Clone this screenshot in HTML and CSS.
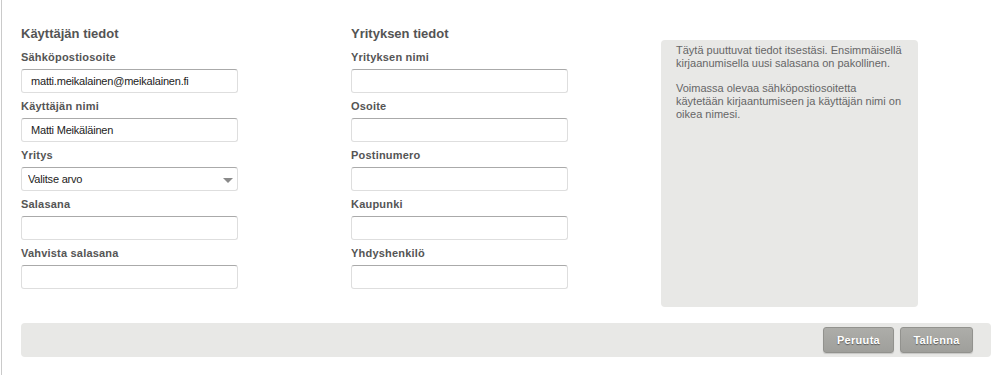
FILE: index.html
```html
<!DOCTYPE html>
<html lang="fi">
<head>
    <meta charset="UTF-8">
    <meta name="viewport" content="width=device-width, initial-scale=1.0">
    <title>Omat tiedot</title>
    <link rel="stylesheet" href="styles.css">
</head>
<body>
    <div class="page">
        <div class="content">
            <div class="column">
                <h3>Käyttäjän tiedot</h3>
                <div class="field">
                    <label for="email">Sähköpostiosoite</label>
                    <input type="text" id="email" value="matti.meikalainen@meikalainen.fi">
                </div>
                <div class="field">
                    <label for="name">Käyttäjän nimi</label>
                    <input type="text" id="name" value="Matti Meikäläinen">
                </div>
                <div class="field">
                    <label for="company">Yritys</label>
                    <div class="select-wrap">
                        <select id="company">
                            <option>Valitse arvo</option>
                        </select>
                    </div>
                </div>
                <div class="field">
                    <label for="password">Salasana</label>
                    <input type="password" id="password">
                </div>
                <div class="field">
                    <label for="password2">Vahvista salasana</label>
                    <input type="password" id="password2">
                </div>
            </div>

            <div class="column">
                <h3>Yrityksen tiedot</h3>
                <div class="field">
                    <label for="companyName">Yrityksen nimi</label>
                    <input type="text" id="companyName">
                </div>
                <div class="field">
                    <label for="address">Osoite</label>
                    <input type="text" id="address">
                </div>
                <div class="field">
                    <label for="zip">Postinumero</label>
                    <input type="text" id="zip">
                </div>
                <div class="field">
                    <label for="city">Kaupunki</label>
                    <input type="text" id="city">
                </div>
                <div class="field">
                    <label for="contact">Yhdyshenkilö</label>
                    <input type="text" id="contact">
                </div>
            </div>

            <div class="info">
                <p>Täytä puuttuvat tiedot itsestäsi. Ensimmäisellä kirjaanumisella uusi salasana on pakollinen.</p>
                <p>Voimassa olevaa sähköpostiosoitetta käytetään kirjaantumiseen ja käyttäjän nimi on oikea nimesi.</p>
            </div>
        </div>

        <div class="actions">
            <button type="button" class="btn-cancel">Peruuta</button>
            <button type="submit" class="btn-save">Tallenna</button>
        </div>
    </div>
</body>
</html>
```

FILE: styles.css
```css
* {
    margin: 0;
    padding: 0;
    box-sizing: border-box;
}
body {
    font-family: "Liberation Sans", Arial, sans-serif;
    background: #fff;
}
.page {
    margin-left: 1px;
    border-left: 1px solid #cacaca;
    min-height: 100vh;
    padding: 0 5px 0 19px;
}
.content {
    display: grid;
    grid-template-columns: 330px 310px 257px;
    align-items: start;
    padding-top: 26px;
}
.column h3 {
    font-size: 13px;
    line-height: 15px;
    font-weight: bold;
    color: #545454;
    margin-bottom: 10px;
}
.field label {
    display: block;
    font-size: 11px;
    line-height: 13px;
    font-weight: bold;
    color: #555;
    letter-spacing: 0.2px;
    margin-bottom: 5px;
}
.field input,
.field select {
    display: block;
    width: 217px;
    height: 24px;
    margin-bottom: 7px;
    padding: 0 9px;
    border: 1px solid #dedede;
    border-top-color: #aaa;
    border-radius: 3px;
    font-family: inherit;
    font-size: 11px;
    letter-spacing: -0.2px;
    color: #222;
    background: #fff;
}
.field input:focus,
.field select:focus {
    outline: none;
    border-color: #aaa;
}
.field select {
    appearance: none;
    -webkit-appearance: none;
    padding: 0 6px;
}
.select-wrap {
    position: relative;
    width: 217px;
}
.select-wrap::after {
    content: "";
    position: absolute;
    right: 5px;
    top: 11px;
    border-left: 5px solid transparent;
    border-right: 5px solid transparent;
    border-top: 5px solid #8a8a8a;
    pointer-events: none;
}
.info {
    margin-top: 14px;
    height: 267px;
    padding: 4px 15px;
    background: #e8e8e6;
    border-radius: 4px;
    font-size: 11px;
    line-height: 12.7px;
    color: #666;
}
.info p {
    margin-bottom: 12.7px;
}
.actions {
    display: flex;
    justify-content: flex-end;
    gap: 6px;
    margin-top: 16px;
    height: 34px;
    padding: 4px 18px;
    background: #e8e8e6;
    border-radius: 4px;
}
.actions button {
    height: 26px;
    padding: 0;
    background: linear-gradient(#adada9, #9f9f9b);
    border: 1px solid #92928e;
    border-radius: 3px;
    box-shadow: 0 1px 1px rgba(0, 0, 0, 0.15);
    font-family: inherit;
    font-size: 11px;
    font-weight: bold;
    letter-spacing: 0.3px;
    color: #fff;
    text-shadow: 0 1px 1px rgba(0, 0, 0, 0.45);
    cursor: pointer;
}
.actions .btn-cancel {
    width: 71px;
}
.actions .btn-save {
    width: 73px;
}
.actions button:hover {
    background: #999995;
}
```
